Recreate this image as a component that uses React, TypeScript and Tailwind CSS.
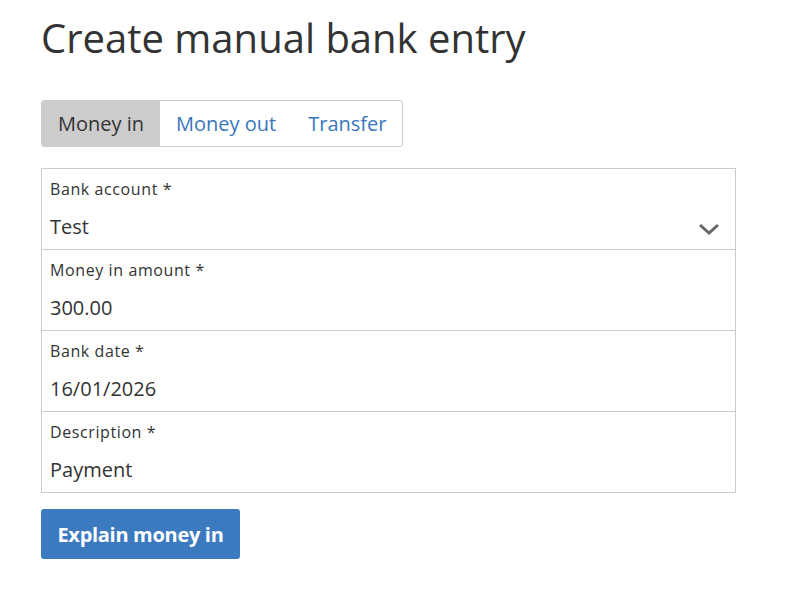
import React from "react";

function Field({ label, value, select }: { label: string; value: string; select?: boolean }) {
  return (
    <div className="relative box-content h-[80px] border-b border-[#cccccc] last:border-b-0 px-[8px]">
      <div className="pt-[8px] text-[16px] leading-[24px] tracking-[0.6px] text-[#333333]">{label}</div>
      <div className="mt-[13px] text-[20px] leading-[26px] text-[#333333]">{value}</div>
      {select && (
        <svg
          className="absolute right-[15px] top-[53px]"
          width="22"
          height="14"
          viewBox="0 0 22 14"
          fill="none"
        >
          <path d="M2 3 L11 11 L20 3" stroke="#666666" strokeWidth="3" strokeLinecap="butt" strokeLinejoin="miter" />
        </svg>
      )}
    </div>
  );
}

export default function App() {
  return (
    <div className="min-h-[590px] w-[808px] bg-white px-[41px] pt-[12px]" style={{ fontFamily: '"Open Sans", sans-serif' }}>
      <h1 className="text-[40px] leading-[52px] font-normal text-[#333333]">Create manual bank entry</h1>
      <div className="mt-[36px] inline-flex h-[47px] rounded-[3px] border border-[#cccccc] overflow-hidden">
        <div className="flex items-center bg-[#cccccc] px-[16px] text-[20px] text-[#333333]">Money in</div>
        <div className="flex items-center px-[16px] text-[20px] text-[#3a76bc]">Money out</div>
        <div className="flex items-center px-[16px] text-[20px] text-[#3a76bc]">Transfer</div>
      </div>
      <div className="mt-[21px] w-[695px] border border-[#cccccc]">
        <Field label="Bank account *" value="Test" select />
        <Field label="Money in amount *" value="300.00" />
        <Field label="Bank date *" value="16/01/2026" />
        <Field label="Description *" value="Payment" />
      </div>
      <button className="mt-[16px] flex h-[50px] w-[199px] items-center justify-center rounded-[3px] bg-[#3c7abf] pt-[2px] text-[20px] font-bold tracking-[-0.3px] text-white">
        Explain money in
      </button>
    </div>
  );
}
